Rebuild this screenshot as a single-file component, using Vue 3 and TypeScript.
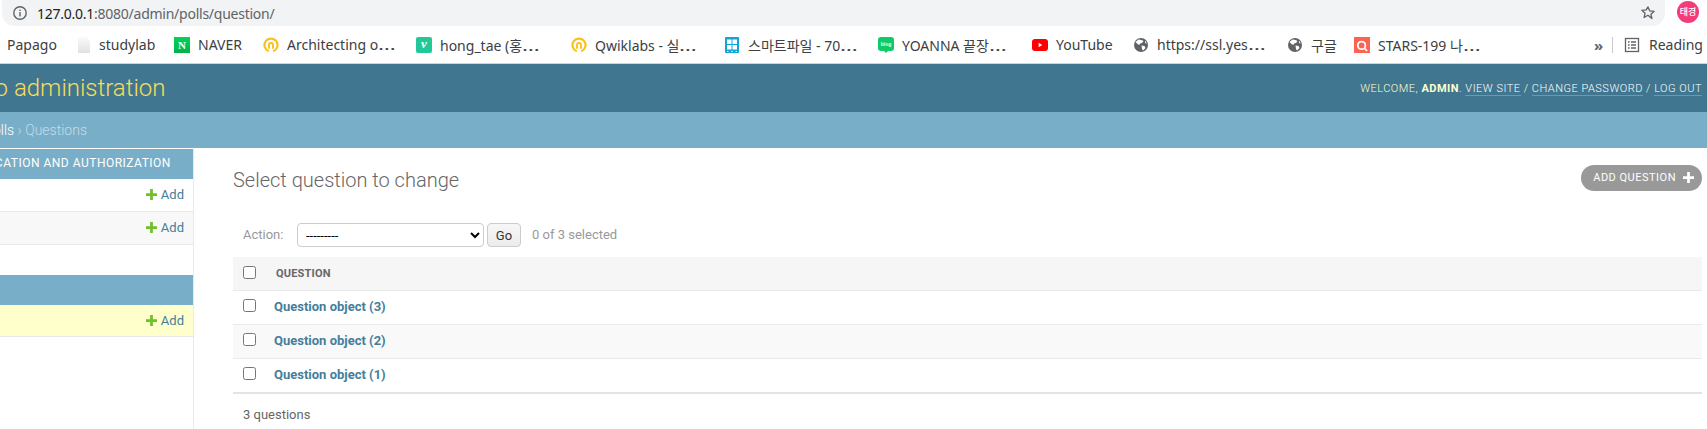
<script setup lang="ts">
interface Bookmark { label: string; icon: string; width: number; elided?: boolean }
const bookmarks: Bookmark[] = [
  { label: 'Papago', icon: 'none', width: 70 },
  { label: 'studylab', icon: 'file', width: 97 },
  { label: 'NAVER', icon: 'naver', width: 89 },
  { label: 'Architecting o', icon: 'qwik', width: 153, elided: true },
  { label: 'hong_tae (홍', icon: 'vee', width: 155, elided: true },
  { label: 'Qwiklabs - 실', icon: 'qwik', width: 153, elided: true },
  { label: '스마트파일 - 70', icon: 'smart', width: 154, elided: true },
  { label: 'YOANNA 끝장', icon: 'blog', width: 154, elided: true },
  { label: 'YouTube', icon: 'yt', width: 101 },
  { label: 'https://ssl.yes', icon: 'globe', width: 154, elided: true },
  { label: '구글', icon: 'globe', width: 67 },
  { label: 'STARS-199 나', icon: 'stars', width: 130, elided: true },
]
const rows = [3, 2, 1]
</script>

<template>
  <div class="screen">
    <div class="omni-row">
      <div class="omnibox">
        <svg class="info" width="16" height="16" viewBox="0 0 16 16" fill="none">
          <circle cx="8" cy="8" r="6.2" stroke="#5f6368" stroke-width="1.4" />
          <rect x="7.3" y="7" width="1.4" height="4.4" fill="#5f6368" />
          <rect x="7.3" y="4.6" width="1.4" height="1.4" fill="#5f6368" />
        </svg>
        <span class="url"><span class="host">127.0.0.1</span>:8080/admin/polls/question/</span>
        <svg class="star" width="16" height="16" viewBox="0 0 16 16" fill="none">
          <path d="M8 1.9l1.8 4 4.4.4-3.3 2.9 1 4.3L8 10.3l-3.9 2.2 1-4.3-3.3-2.9 4.4-.4z" stroke="#5f6368" stroke-width="1.3" stroke-linejoin="round" />
        </svg>
      </div>
      <div class="avatar">태경</div>
    </div>

    <div class="bookmarks">
      <div v-for="b in bookmarks" :key="b.label" class="bookmark" :style="{ width: b.width + 'px' }">
        <svg v-if="b.icon === 'file'" class="bm-icon file" viewBox="1 0 14 16">
          <defs>
            <linearGradient id="filegrad" x1="0" y1="0" x2="0" y2="1">
              <stop offset="0" stop-color="#fafafa" />
              <stop offset="1" stop-color="#dfe1e4" />
            </linearGradient>
          </defs>
          <path d="M2 0h8.5L14 3.5V16H2z" fill="url(#filegrad)" />
        </svg>
        <span v-else-if="b.icon === 'naver'" class="bm-icon naver">N</span>
        <svg v-else-if="b.icon === 'qwik'" class="bm-icon" viewBox="0 0 16 16" fill="none">
          <path d="M5.8 14.2a6.5 6.5 0 1 1 4.4 0" stroke="#fbc11b" stroke-width="2.2" />
          <path d="M6 11.8V8a2 2 0 0 1 4 0v3.8" stroke="#fbc11b" stroke-width="1.9" />
        </svg>
        <span v-else-if="b.icon === 'vee'" class="bm-icon vee">v</span>
        <svg v-else-if="b.icon === 'smart'" class="bm-icon" viewBox="0 0 16 16">
          <rect x="1" y="0" width="14" height="16" rx="1" fill="#12a5d8" />
          <rect x="3" y="2.5" width="4.5" height="4.5" fill="#fff" />
          <rect x="8.5" y="2.5" width="4.5" height="4.5" fill="#fff" />
          <rect x="3" y="8" width="4.5" height="4.5" fill="#fff" />
          <rect x="8.5" y="8" width="4.5" height="4.5" fill="#fff" />
          <rect x="3" y="14" width="1.4" height="1" fill="#fff" />
          <rect x="7.3" y="14" width="1.4" height="1" fill="#fff" />
          <rect x="11.6" y="14" width="1.4" height="1" fill="#fff" />
        </svg>
        <svg v-else-if="b.icon === 'blog'" class="bm-icon" viewBox="0 0 16 16">
          <path d="M3 0h10a3 3 0 0 1 3 3v8a3 3 0 0 1-3 3h-3l-2 2-2-2H3a3 3 0 0 1-3-3V3a3 3 0 0 1 3-3z" fill="#0ecb68" />
          <text x="8" y="9" text-anchor="middle" class="blog-word">blog</text>
        </svg>
        <svg v-else-if="b.icon === 'yt'" class="bm-icon" viewBox="0 0 16 16">
          <rect x="0" y="2" width="16" height="12" rx="3" fill="#f00" />
          <path d="M6.6 5.8v4.4L10.2 8z" fill="#fff" />
        </svg>
        <svg v-else-if="b.icon === 'globe'" class="bm-icon" viewBox="0 0 16 16">
          <circle cx="8" cy="8" r="7" fill="#5f6368" />
          <path d="M5.5 2.5l3 .5 2 1-1.5 2-2 .5-.5 1.5-2-1-2-2zM8.5 8.5l3 .5 1 2-2.5 2.5-1-1.5zM12 3.5l1.8 3-1.8-.5z" fill="#fff" />
        </svg>
        <span v-else-if="b.icon === 'stars'" class="bm-icon stars">
          <svg width="16" height="16" viewBox="0 0 16 16" fill="none">
            <circle cx="7.6" cy="7.4" r="3.8" stroke="#fff" stroke-width="1.8" />
            <path d="M10.4 10.2l2.6 2.8" stroke="#fff" stroke-width="1.8" />
          </svg>
        </span>
        <span class="bm-label">{{ b.label }}<span v-if="b.elided" class="ell">…</span></span>
      </div>
      <div class="bm-end">
        <span class="more">»</span>
        <span class="bm-sep"></span>
        <svg class="reading" width="16" height="16" viewBox="0 0 16 16" fill="none">
          <rect x="1.5" y="1.5" width="13" height="13" stroke="#5f6368" stroke-width="1.3" />
          <path d="M4 5h1.6M7 5h5M4 8h1.6M7 8h5M4 11h1.6M7 11h5" stroke="#5f6368" stroke-width="1.3" />
        </svg>
        <span class="reading-label">Reading</span>
      </div>
    </div>

    <div class="viewport">
      <div class="page">
        <header class="admin-header">
          <div class="branding">Django administration</div>
          <div class="user-tools">
            Welcome, <strong>admin</strong>. <a>View site</a> / <a>Change password</a> / <a>Log out</a>
          </div>
        </header>
        <div class="crumbs"><a>Home</a> › <a>Polls</a> › Questions</div>

        <div class="body-row">
          <aside class="sidebar">
            <div class="side-head">Authentication and Authorization</div>
            <div class="side-row"><a class="side-name">Groups</a><span class="add"><svg class="plus" viewBox="0 0 12 12"><path d="M4.5 0h3v4.5H12v3H7.5V12h-3V7.5H0v-3h4.5z" fill="#70bf2b" /></svg>Add</span></div>
            <div class="side-row alt"><a class="side-name">Users</a><span class="add"><svg class="plus" viewBox="0 0 12 12"><path d="M4.5 0h3v4.5H12v3H7.5V12h-3V7.5H0v-3h4.5z" fill="#70bf2b" /></svg>Add</span></div>
            <div class="side-gap"></div>
            <div class="side-head">Polls</div>
            <div class="side-row current"><a class="side-name">Questions</a><span class="add"><svg class="plus" viewBox="0 0 12 12"><path d="M4.5 0h3v4.5H12v3H7.5V12h-3V7.5H0v-3h4.5z" fill="#70bf2b" /></svg>Add</span></div>
          </aside>

          <main class="content">
            <div class="title-row">
              <h1>Select question to change</h1>
              <a class="add-btn">Add question
                <svg class="btn-plus" viewBox="0 0 12 12"><path d="M4.5 0h3v4.5H12v3H7.5V12h-3V7.5H0v-3h4.5z" fill="#fff" /></svg>
              </a>
            </div>

            <div class="actions">
              <label class="action-label">Action:</label>
              <select class="action-select"><option>---------</option></select>
              <button class="go" type="button">Go</button>
              <span class="counter">0 of 3 selected</span>
            </div>

            <table class="results">
              <thead>
                <tr>
                  <th class="cb"><input type="checkbox" /></th>
                  <th class="head-cell">Question</th>
                </tr>
              </thead>
              <tbody>
                <tr v-for="n in rows" :key="n">
                  <td class="cb"><input type="checkbox" /></td>
                  <td class="name-cell"><a>Question object ({{ n }})</a></td>
                </tr>
              </tbody>
            </table>
            <p class="paginator">3 questions</p>
          </main>
        </div>
      </div>
    </div>
  </div>
</template>

<style>
html, body { margin: 0; background: #fff; overflow: hidden; }
</style>

<style scoped>
.screen { width: 1707px; height: 429px; overflow: hidden; font-family: "Noto Sans", "Noto Sans CJK KR", sans-serif; background: #fff; }

.omni-row { height: 26px; display: flex; }
.omnibox { margin-left: 2px; width: 1663px; height: 26px; background: #f1f3f4; border-radius: 0 0 13px 13px; display: flex; align-items: center; box-sizing: border-box; padding: 0 9px 0 10px; }
.info { flex: none; }
.url { margin-left: 9px; font-size: 14px; color: #5f6368; flex: 1; white-space: nowrap; letter-spacing: -0.25px; }
.host { color: #202124; }
.star { flex: none; }
.avatar { margin-left: 12px; width: 22px; height: 22px; margin-top: 1px; border-radius: 50%; background: #f23d7a; color: #fff; font-size: 9px; font-weight: 500; line-height: 22px; text-align: center; font-family: "Noto Sans CJK KR", sans-serif; white-space: nowrap; }

.bookmarks { height: 37px; border-bottom: 1px solid #d0d2d5; display: flex; align-items: center; padding-left: 7px; position: relative; }
.bookmark { flex: none; display: flex; align-items: center; gap: 8px; white-space: nowrap; }
.bm-icon { flex: none; width: 16px; height: 16px; display: block; }
.bm-icon.file { width: 14px; }
.bm-label { font-size: 14px; color: #3c4043; }
.ell { display: inline-block; width: 18px; transform: scaleX(1.6); transform-origin: left center; }
.naver { background: linear-gradient(#00d45a, #03b14a); color: #fff; font: 700 11px/16px "Liberation Serif", serif; text-align: center; }
.vee { background: #20c997; border-radius: 2px; color: #fff; font: italic 700 13px/14px "Liberation Serif", serif; text-align: center; }
.stars { background: #fc6451; }
.blog-word { font: 700 5px "Liberation Sans", sans-serif; fill: #e8fff2; }
.bm-end { margin-left: 110px; flex: none; display: flex; align-items: center; white-space: nowrap; }
.more { font-size: 15px; color: #5f6368; font-weight: 700; width: 18px; line-height: 16px; }
.bm-sep { width: 1px; height: 16px; background: #c8cacd; }
.reading { margin-left: 11px; flex: none; }
.reading-label { margin-left: 9px; font-size: 14px; color: #3c4043; }

.viewport { height: 365px; overflow: hidden; }
.page { width: 1824px; margin-left: -82px; font-family: Roboto, sans-serif; }

.admin-header { height: 48px; box-sizing: border-box; padding: 0 40px 0 16px; background: #417690; display: flex; align-items: center; justify-content: space-between; }
.branding { font-size: 24px; font-weight: 300; color: #f5dd5d; }
.user-tools { font-size: 11px; font-weight: 300; letter-spacing: 0.5px; text-transform: uppercase; color: #ffc; }
.user-tools strong { font-weight: 700; }
.user-tools a { color: #fff; border-bottom: 1px solid rgba(255, 255, 255, 0.25); }

.crumbs { height: 36px; box-sizing: border-box; padding: 0 40px 0 18px; background: #79aec8; color: #c4dce8; font-size: 14px; font-weight: 300; line-height: 37px; }
.crumbs a { color: #fff; }

.body-row { display: flex; height: 281px; }
.sidebar { width: 275px; flex: none; border-right: 1px solid #eaeaea; padding-top: 1px; font-size: 13px; }
.side-head { height: 30px; box-sizing: border-box; background: #79aec8; color: #fff; padding-left: 16px; font-size: 12px; line-height: 29px; letter-spacing: 0.5px; text-transform: uppercase; white-space: nowrap; font-weight: 400; }
.side-row { height: 33px; box-sizing: border-box; border-bottom: 1px solid #eaeaea; background: #fff; display: flex; align-items: center; justify-content: space-between; padding: 0 9px 0 8px; }
.side-row.alt { background: #f8f8f8; }
.side-row.current { background: #ffc; height: 32px; }
.side-row:not(.current) .add { padding-bottom: 2px; }
.side-gap { height: 30px; }
.side-name { color: #447e9b; font-weight: 700; }
.add { display: flex; align-items: center; color: #447e9b; }
.plus { width: 11px; height: 11px; margin-right: 4px; }

.content { flex: 1; min-width: 0; padding: 17px 40px 0 39px; }
.title-row { display: flex; justify-content: space-between; align-items: flex-start; height: 27px; }
h1 { margin: 3px 0 0; font-size: 20px; line-height: 24px; font-weight: 300; color: #666; }
.add-btn { display: flex; align-items: center; height: 26px; box-sizing: border-box; padding: 0 8px 1px 12px; border-radius: 13px; background: #999; color: #fff; font-size: 11px; letter-spacing: 0.5px; text-transform: uppercase; white-space: nowrap; }
.btn-plus { width: 11px; height: 11px; margin-left: 7px; }

.actions { margin-top: 31px; height: 24px; display: flex; align-items: center; font-size: 13px; color: #999; }
.action-label { margin-left: 10px; width: 54px; padding-bottom: 2px; }
.action-select { width: 187px; height: 24px; box-sizing: border-box; border: 1px solid #ccc; border-radius: 4px; background: #fff; font-size: 13px; font-family: Roboto, sans-serif; color: #000; padding: 0 4px; }
.go { margin-left: 3px; width: 34px; height: 24px; box-sizing: border-box; border: 1px solid #ccc; border-radius: 4px; background: linear-gradient(#f7f7f7, #ececec); color: #333; font-size: 13px; font-family: Roboto, sans-serif; padding: 0; }
.counter { margin-left: 11px; padding-bottom: 2px; }

.results { margin-top: 10px; width: 100%; border-collapse: separate; border-spacing: 0; font-size: 13px; }
.results th { height: 33px; padding: 0; background: #f6f6f6; border-top: 0; border-bottom: 1px solid #eaeaea; box-sizing: content-box; text-align: left; }
.results td { height: 33px; padding: 0; border-bottom: 1px solid #eaeaea; box-sizing: content-box; }
.results tbody tr:nth-child(2) td { background: #f9f9f9; }
.results tbody tr:last-child td { border-bottom: 2px solid #e4e4e4; }
.cb { width: 41px; }
.cb input { display: block; width: 13px; height: 13px; margin: 0 0 4px 10px; }
th.cb input { margin-bottom: 2px; }
.head-cell { font-size: 11px; font-weight: 700; color: #666; text-transform: uppercase; letter-spacing: 0.2px; padding-left: 2px !important; }
.name-cell a { display: block; padding-bottom: 2px; color: #447e9b; font-weight: 700; }

.paginator { margin: 13px 0 0 10px; font-size: 13px; line-height: 16px; color: #666; }
</style>
